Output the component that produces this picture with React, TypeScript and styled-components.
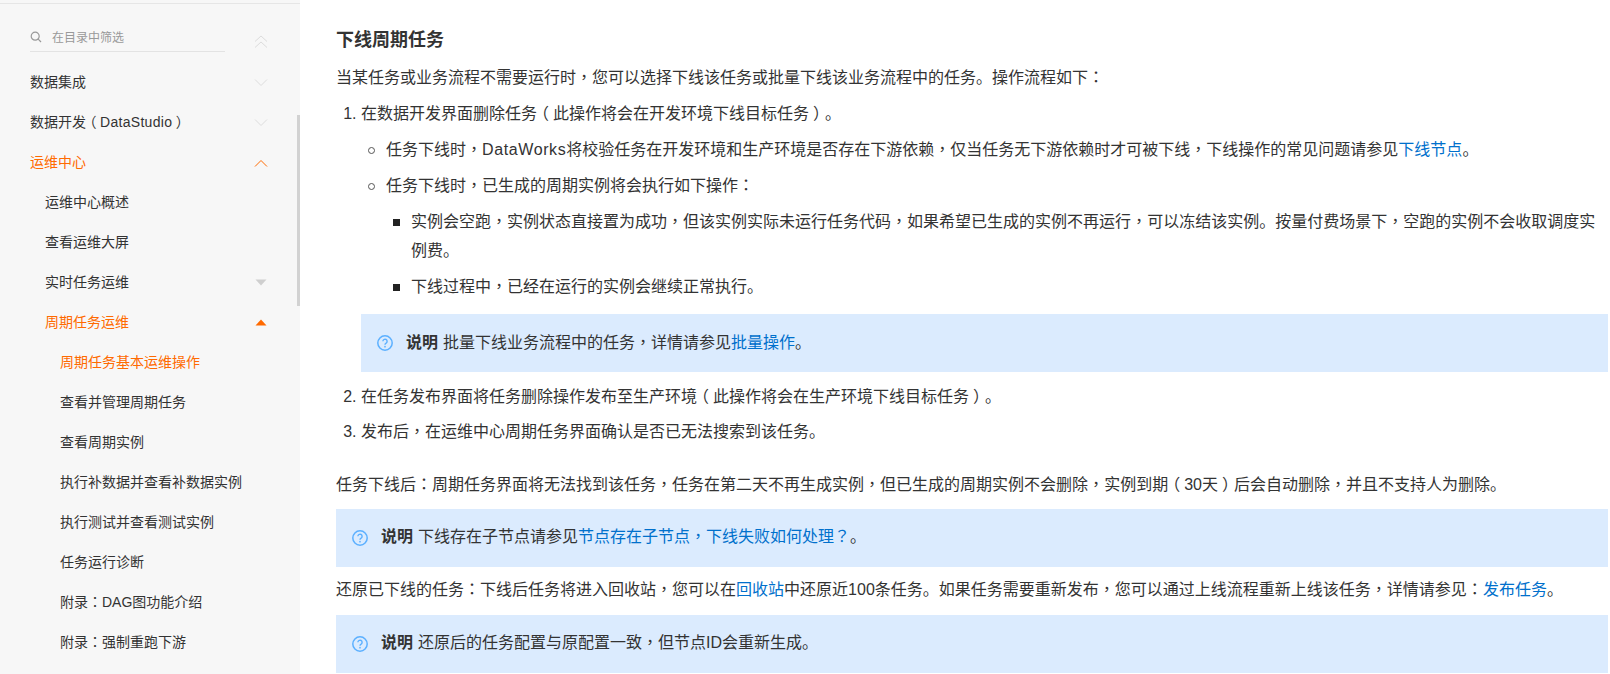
import React from "react";
import styled, { createGlobalStyle } from "styled-components";

const Global = createGlobalStyle`
  html, body { margin: 0; padding: 0; background: #fff; }
  body { font-family: "Liberation Sans", "Noto Sans CJK SC", sans-serif; color: #333; }
`;

const Page = styled.div`
  display: flex;
  width: 1610px;
  height: 674px;
  overflow: hidden;
`;

const Sidebar = styled.aside`
  position: relative;
  flex: 0 0 300px;
  height: 674px;
  background: #f7f7f7;
  padding-top: 3px;
  box-sizing: border-box;
`;

const TopRule = styled.div`
  height: 1px;
  background: #e6e6e6;
`;

const SearchRow = styled.div`
  display: flex;
  align-items: flex-end;
  height: 48px;
  padding-left: 30px;
`;

const SearchBox = styled.div`
  display: flex;
  align-items: center;
  gap: 10px;
  width: 195px;
  height: 29px;
  box-sizing: border-box;
  padding-bottom: 1px;
  border-bottom: 1px solid #e3e3e3;
  font-size: 12px;
  color: #999;
`;

const CollapseAll = styled.span`
  display: flex;
  margin-left: 29px;
  margin-bottom: 3px;
`;

const Menu = styled.ul`
  list-style: none;
  margin: 9px 0 0;
  padding: 0;
`;

const Row = styled.li<{ $level: number; $active?: boolean }>`
  display: flex;
  align-items: center;
  justify-content: space-between;
  box-sizing: border-box;
  height: 40px;
  padding-left: ${(p) => 30 + p.$level * 15}px;
  padding-right: 32px;
  font-size: 14px;
  color: ${(p) => (p.$active ? "#ff6a00" : "#333")};
`;

const MarkSlot = styled.span`
  display: flex;
  margin-top: 3px;
`;

const ScrollThumb = styled.div`
  position: absolute;
  right: 0;
  top: 115px;
  width: 3px;
  height: 191px;
  background: #d2d2d2;
`;

const Main = styled.main`
  flex: 1;
  min-width: 0;
  padding: 26px 2px 0 36px;
  font-size: 16px;
  line-height: 28.8px;
`;

const Title = styled.h2`
  margin: 0 0 10px;
  font-size: 18px;
  line-height: 28px;
  font-weight: 700;
  color: #333;
`;

const Para = styled.p<{ $top?: number }>`
  margin: ${(p) => p.$top ?? 0}px 0 0;
`;

const Steps = styled.ol`
  margin: 7px 0 0;
  padding: 0 0 0 25px;
`;

const Bullets = styled.ul`
  margin: 0;
  padding: 0 0 0 25px;
  list-style: none;
`;

const Item = styled.li`
  margin-top: 7.2px;
`;

const BulletItem = styled.li<{ $kind: "circle" | "square" }>`
  position: relative;
  margin-top: 7.2px;

  &::before {
    content: "";
    position: absolute;
    left: -18px;
    top: 11px;
    width: 7px;
    height: 7px;
    box-sizing: border-box;
    border-radius: ${(p) => (p.$kind === "circle" ? "50%" : "0")};
    border: ${(p) => (p.$kind === "circle" ? "1px solid #555" : "none")};
    background: ${(p) => (p.$kind === "circle" ? "transparent" : "#222")};
  }
`;

const Link = styled.a`
  color: #0070cc;
  text-decoration: none;
`;

const Callout = styled.div<{ $top: number }>`
  display: flex;
  align-items: center;
  height: 58px;
  box-sizing: border-box;
  margin-top: ${(p) => p.$top}px;
  padding-left: 16px;
  background: #dbebfe;
`;

const NoteIcon = styled.svg`
  flex: none;
  width: 16px;
  height: 16px;
  margin-right: 13px;
`;

const NoteLabel = styled.strong`
  font-weight: 700;
  margin-right: 5px;
`;

const StepsAfterNote = styled.li`
  margin-top: 10.6px;
`;

const Punct = styled.span`
  font-family: "Noto Sans CJK TC", sans-serif;
  line-height: 0;
`;

const Paren = styled.span`
  font-feature-settings: "halt";
  padding: 0 0.25em;
`;

const Latin = styled.span<{ $track: number }>`
  letter-spacing: ${(p) => p.$track}px;
`;

const Tail = styled.span`
  display: block;
`;

const T = ({ children }: { children: string }) => (
  <>
    {children.split(/([，：？（）])/).map((part, i) => {
      if (i % 2 === 0) return part;
      if (part === "（" || part === "）") return <Paren key={i}>{part}</Paren>;
      return <Punct key={i}>{part}</Punct>;
    })}
  </>
);

const Chevron = ({ up, color }: { up?: boolean; color: string }) => (
  <svg width="14" height="8" viewBox="0 0 14 8" fill="none">
    <path d={up ? "M1 7.5 7 1.500l6 6" : "M1 .5l6 6 6-6"} stroke={color} strokeWidth="1" />
  </svg>
);

const Caret = ({ up, color }: { up?: boolean; color: string }) => (
  <svg width="14" height="7" viewBox="0 0 14 7">
    <path d={up ? "M1.500 6.500 7 .5l5.500 6z" : "M1.500.5h11L7 6.500z"} fill={color} />
  </svg>
);

const Note = ({ top, children }: { top: number; children: React.ReactNode }) => (
  <Callout $top={top}>
    <NoteIcon viewBox="0 0 16 16" fill="none">
      <circle cx="8" cy="8" r="7.200" stroke="#5cb0ff" strokeWidth="1.500" />
      <path d="M5.900 6.300a2.100 2.100 0 1 1 3.200 1.800c-.7.4-1.100.8-1.100 1.700" stroke="#5cb0ff" strokeWidth="1.400" />
      <circle cx="8" cy="11.700" r=".85" fill="#5cb0ff" />
    </NoteIcon>
    <span>
      <NoteLabel>说明</NoteLabel>
      {children}
    </span>
  </Callout>
);

type Entry = { label: React.ReactNode; key: string; level: number; active?: boolean; mark?: "down" | "up" | "caretDown" | "caretUp" };

const entries: Entry[] = [
  { key: "a", label: "数据集成", level: 0, mark: "down" },
  {
    key: "b",
    label: (
      <>
        <T>数据开发（</T>
        <Latin $track={0.3}>DataStudio</Latin>
        <T>）</T>
      </>
    ),
    level: 0,
    mark: "down",
  },
  { key: "c", label: "运维中心", level: 0, active: true, mark: "up" },
  { key: "d", label: "运维中心概述", level: 1 },
  { key: "e", label: "查看运维大屏", level: 1 },
  { key: "f", label: "实时任务运维", level: 1, mark: "caretDown" },
  { key: "g", label: "周期任务运维", level: 1, active: true, mark: "caretUp" },
  { key: "h", label: "周期任务基本运维操作", level: 2, active: true },
  { key: "i", label: "查看并管理周期任务", level: 2 },
  { key: "j", label: "查看周期实例", level: 2 },
  { key: "k", label: "执行补数据并查看补数据实例", level: 2 },
  { key: "l", label: "执行测试并查看测试实例", level: 2 },
  { key: "m", label: "任务运行诊断", level: 2 },
  { key: "n", label: <T>附录：DAG图功能介绍</T>, level: 2 },
  { key: "o", label: <T>附录：强制重跑下游</T>, level: 2 },
];

const Mark = ({ kind }: { kind?: Entry["mark"] }) => {
  if (kind === "down") return <MarkSlot><Chevron color="#dcdcdc" /></MarkSlot>;
  if (kind === "up") return <MarkSlot><Chevron up color="#ff6a00" /></MarkSlot>;
  if (kind === "caretDown") return <MarkSlot><Caret color="#cfcfcf" /></MarkSlot>;
  if (kind === "caretUp") return <MarkSlot><Caret up color="#ff6a00" /></MarkSlot>;
  return null;
};

export default function App() {
  return (
    <Page>
      <Global />
      <Sidebar>
        <TopRule />
        <SearchRow>
          <SearchBox>
            <svg width="12" height="12" viewBox="0 0 12 12" fill="none">
              <circle cx="5.200" cy="5.200" r="4" stroke="#999" strokeWidth="1.200" />
              <path d="M8.200 8.200 11 11" stroke="#999" strokeWidth="1.200" />
            </svg>
            在目录中筛选
          </SearchBox>
          <CollapseAll>
            <svg width="14" height="14" viewBox="0 0 14 14" fill="none">
              <path d="M1 6.500 7 1l6 5.500M1 12.500 7 7l6 5.500" stroke="#dcdcdc" strokeWidth="1" />
            </svg>
          </CollapseAll>
        </SearchRow>
        <Menu>
          {entries.map((e) => (
            <Row key={e.key} $level={e.level} $active={e.active}>
              <span>{e.label}</span>
              <Mark kind={e.mark} />
            </Row>
          ))}
        </Menu>
        <ScrollThumb />
      </Sidebar>
      <Main>
        <Title>下线周期任务</Title>
        <Para>
          <T>当某任务或业务流程不需要运行时，您可以选择下线该任务或批量下线该业务流程中的任务。操作流程如下：</T>
        </Para>
        <Steps>
          <Item>
            <T>在数据开发界面删除任务（此操作将会在开发环境下线目标任务）。</T>
            <Bullets>
              <BulletItem $kind="circle">
                <T>任务下线时，</T>
                <Latin $track={0.6}>DataWorks</Latin>
                <T>将校验任务在开发环境和生产环境是否存在下游依赖，仅当任务无下游依赖时才可被下线，下线操作的常见问题请参见</T>
                <Link>下线节点</Link>。
              </BulletItem>
              <BulletItem $kind="circle">
                <T>任务下线时，已生成的周期实例将会执行如下操作：</T>
                <Bullets>
                  <BulletItem $kind="square">
                    <T>实例会空跑，实例状态直接置为成功，但该实例实际未运行任务代码，如果希望已生成的实例不再运行，可以冻结该实例。按量付费场景下，空跑的实例不会收取调度实</T>
                    <Tail>例费。</Tail>
                  </BulletItem>
                  <BulletItem $kind="square">
                    <T>下线过程中，已经在运行的实例会继续正常执行。</T>
                  </BulletItem>
                </Bullets>
              </BulletItem>
            </Bullets>
            <Note top={12.4}>
              <T>批量下线业务流程中的任务，详情请参见</T>
              <Link>批量操作</Link>。
            </Note>
          </Item>
          <StepsAfterNote>
            <T>在任务发布界面将任务删除操作发布至生产环境（此操作将会在生产环境下线目标任务）。</T>
          </StepsAfterNote>
          <Item>
            <T>发布后，在运维中心周期任务界面确认是否已无法搜索到该任务。</T>
          </Item>
        </Steps>
        <Para $top={24}>
          <T>任务下线后：周期任务界面将无法找到该任务，任务在第二天不再生成实例，但已生成的周期实例不会删除，实例到期（30天）后会自动删除，并且不支持人为删除。</T>
        </Para>
        <Note top={8.6}>
          下线存在子节点请参见
          <Link>
            <T>节点存在子节点，下线失败如何处理？</T>
          </Link>
          。
        </Note>
        <Para $top={9.6}>
          <T>还原已下线的任务：下线后任务将进入回收站，您可以在</T>
          <Link>回收站</Link>
          <T>中还原近100条任务。如果任务需要重新发布，您可以通过上线流程重新上线该任务，详情请参见：</T>
          <Link>发布任务</Link>。
        </Para>
        <Note top={9.6}>
          <T>还原后的任务配置与原配置一致，但节点ID会重新生成。</T>
        </Note>
      </Main>
    </Page>
  );
}
